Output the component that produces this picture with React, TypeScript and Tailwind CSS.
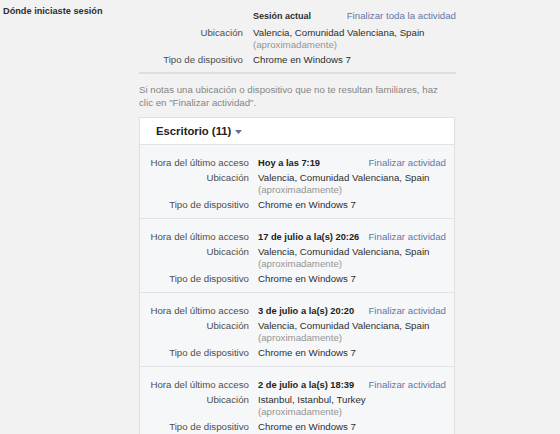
const sessions = [
  { when: "Hoy a las 7:19", place: "Valencia, Comunidad Valenciana, Spain" },
  { when: "17 de julio a la(s) 20:26", place: "Valencia, Comunidad Valenciana, Spain" },
  { when: "3 de julio a la(s) 20:20", place: "Valencia, Comunidad Valenciana, Spain" },
  { when: "2 de julio a la(s) 18:39", place: "Istanbul, Istanbul, Turkey" },
];

function Field({ label, children, labelWidth }: { label: string; children: React.ReactNode; labelWidth: string }) {
  return (
    <div className="flex">
      <div className={`${labelWidth} shrink-0 text-right text-[#4e4e4e]`}>{label}</div>
      <div className="ml-[10px] flex-1">{children}</div>
    </div>
  );
}

function SessionRow({ when, place }: { when: string; place: string }) {
  return (
    <div className="flex flex-col gap-[3px] border-b border-[#e2e3e6] pt-[12px] pb-[7px] pr-[8px]">
      <div className="flex">
        <div className="w-[109px] shrink-0 text-right text-[#4e4e4e]">Hora del último acceso</div>
        <div className="ml-[9px] flex-1 text-[9.3px] font-bold text-[#222]">{when}</div>
        <a className="text-[#6377a8]">Finalizar actividad</a>
      </div>
      <Field label="Ubicación" labelWidth="w-[109px]">
        <div className="-ml-px text-[#2e2e2e]">{place}</div>
        <div className="-ml-px text-[#959595]">(aproximadamente)</div>
      </Field>
      <Field label="Tipo de dispositivo" labelWidth="w-[109px]">
        <div className="-ml-px text-[#2e2e2e]">Chrome en Windows 7</div>
      </Field>
    </div>
  );
}

export default function App() {
  return (
    <div className="min-h-screen overflow-hidden bg-[#f2f2f2] font-['Liberation_Sans',Arial,sans-serif] text-[9.7px] leading-[12px]">
      <div className="flex pt-[5px] pl-[3px]">
        <h2 className="w-[136px] shrink-0 text-[9.2px] font-bold text-[#2e2e2e]">Dónde iniciaste sesión</h2>
        <div className="w-[317px] pt-[5px]">
          <div className="flex">
            <div className="w-[104px] shrink-0" />
            <div className="ml-[10px] flex-1 text-[9px] font-bold text-[#2e2e2e]">Sesión actual</div>
            <a className="text-[#6377a8]">Finalizar toda la actividad</a>
          </div>
          <div className="mt-[5px] flex flex-col gap-[4px]">
            <Field label="Ubicación" labelWidth="w-[104px]">
              <div className="text-[#2e2e2e]">Valencia, Comunidad Valenciana, Spain</div>
              <div className="leading-[11px] text-[#959595]">(aproximadamente)</div>
            </Field>
            <Field label="Tipo de dispositivo" labelWidth="w-[104px]">
              <div className="text-[#2e2e2e]">Chrome en Windows 7</div>
            </Field>
          </div>
          <div className="mt-[6px] h-[2px] bg-[#dedede]" />
          <p className="mt-[9px] max-w-[306px] leading-[13px] text-[#868686]">
            Si notas una ubicación o dispositivo que no te resultan familiares, haz clic en "Finalizar actividad".
          </p>
          <div className="mt-[8px] w-[316px] border border-[#dfe0e3] bg-[#f6f7f8]">
            <div className="flex h-[27px] items-center gap-[4px] border-b border-[#e2e3e6] bg-white pl-[16px]">
              <span className="text-[11.3px] font-bold text-[#222]">Escritorio (11)</span>
              <svg width="7" height="4" viewBox="0 0 7 4" className="mt-[2px]">
                <path d="M0 0h7L3.5 4z" fill="#5b6f9c" />
              </svg>
            </div>
            {sessions.map((s) => (
              <SessionRow key={s.when} when={s.when} place={s.place} />
            ))}
          </div>
        </div>
      </div>
    </div>
  );
}
